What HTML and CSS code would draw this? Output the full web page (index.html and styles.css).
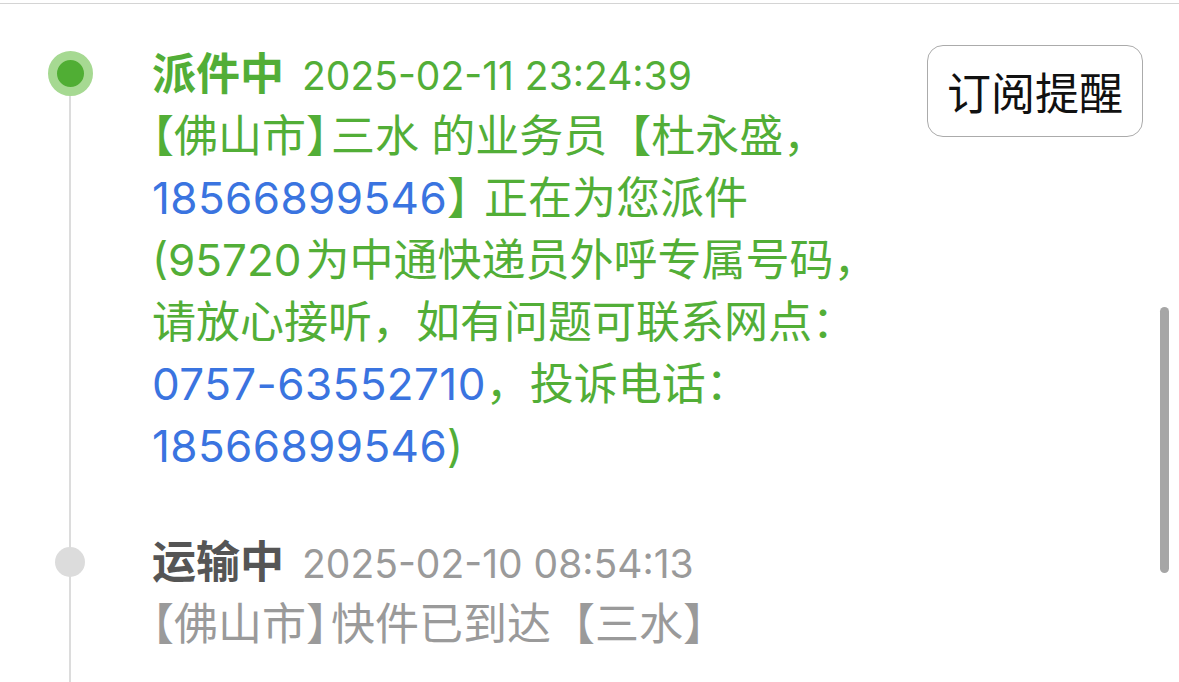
FILE: index.html
```html
<!DOCTYPE html>
<html lang="zh-CN">
<head>
<meta charset="utf-8">
<title>物流详情</title>
<link rel="stylesheet" href="styles.css">
</head>
<body>
<div class="screen">
  <div class="topbar"></div>
  <div class="timeline">
    <div class="item item-first item-active">
      <div class="marker"><span class="dot dot-active"></span></div>
      <div class="content">
        <div class="head"><span class="status">派件中</span><span class="time">2025-02-11 23:24:39</span></div>
        <p class="desc">【佛山市<span class="half">】</span>三水 的业务员【杜永盛，<br><span class="tel">18566899546</span><span class="tight">】</span>正在为您派件<br>(95720<span class="gap"></span>为中通快递员外呼专属号码，<br>请放心接听，如有问题可联系网点：<br><span class="tel">0757-63552710</span>，投诉电话：<br><span class="tel">18566899546</span>)</p>
      </div>
      <div class="actions"><button class="subscribe">订阅提醒</button></div>
    </div>
    <div class="item item-past">
      <div class="marker"><span class="dot dot-past"></span></div>
      <div class="content">
        <div class="head"><span class="status">运输中</span><span class="time">2025-02-10 08:54:13</span></div>
        <p class="desc">【佛山市<span class="half">】</span>快件已到达【三水】</p>
      </div>
      <div class="actions"></div>
    </div>
  </div>
  <div class="scrollbar"></div>
</div>
</body>
</html>
```
FILE: styles.css
```css
html, body {
  margin: 0;
  padding: 0;
  background: #ffffff;
}

body {
  font-family: "Inter", "Noto Sans CJK SC", sans-serif;
  overflow: hidden;
  height: 682px;
}

.screen {
  position: relative;
  height: 682px;
  overflow: hidden;
}

.topbar {
  height: 3px;
  border-bottom: 1px solid #d4d4d4;
}

.timeline {
  padding-top: 39px;
  padding-right: 36px;
}

.item {
  display: grid;
  grid-template-columns: 140px 1fr auto;
  column-gap: 12px;
}

.marker {
  display: flex;
  flex-direction: column;
  align-items: center;
  background: linear-gradient(#dcdcdc, #dcdcdc) no-repeat center top / 2px 100%;
}

.item-first .marker {
  background-position: center bottom;
  background-size: 2px calc(100% - 40px);
}

.dot {
  display: block;
  border-radius: 50%;
  box-sizing: border-box;
}

.dot-active {
  width: 45px;
  height: 45px;
  margin-top: 8px;
  background: #50ae34;
  border: 9px solid #a6d992;
}

.dot-past {
  width: 30px;
  height: 30px;
  margin-top: 16px;
  background: #dcdcdc;
}

.content {
  min-width: 0;
  padding-bottom: 54px;
}

.item-past .content {
  padding-bottom: 80px;
}

.head {
  display: flex;
  align-items: baseline;
  height: 62px;
  line-height: 62px;
}

.status {
  font-size: 44px;
  font-weight: 700;
}

.time {
  font-size: 39px;
  margin-left: 18px;
}

.desc {
  margin: 0;
  font-size: 44px;
  line-height: 62px;
  text-spacing-trim: trim-start;
  white-space: nowrap;
}

.half {
  font-feature-settings: "halt";
  margin-right: 3px;
}

.tight {
  letter-spacing: -7px;
}

.gap {
  display: inline-block;
  width: 4px;
}

.item-active .status,
.item-active .time,
.item-active .desc {
  color: #52ae37;
}

.tel {
  color: #3a74e0;
  letter-spacing: 0.4px;
}

.item-past .status {
  color: #555555;
}

.item-past .time,
.item-past .desc {
  color: #9a9a9a;
}

.actions {
  padding-top: 2px;
}

.subscribe {
  display: block;
  width: 216px;
  height: 92px;
  box-sizing: border-box;
  border: 1px solid #ababab;
  border-radius: 16px;
  background: #ffffff;
  color: #111111;
  font-family: "Noto Sans CJK SC", sans-serif;
  font-size: 44px;
  padding: 0;
}

.scrollbar {
  position: absolute;
  left: 1160px;
  top: 307px;
  width: 9px;
  height: 266px;
  border-radius: 5px;
  background: #a6a6a6;
}
```
